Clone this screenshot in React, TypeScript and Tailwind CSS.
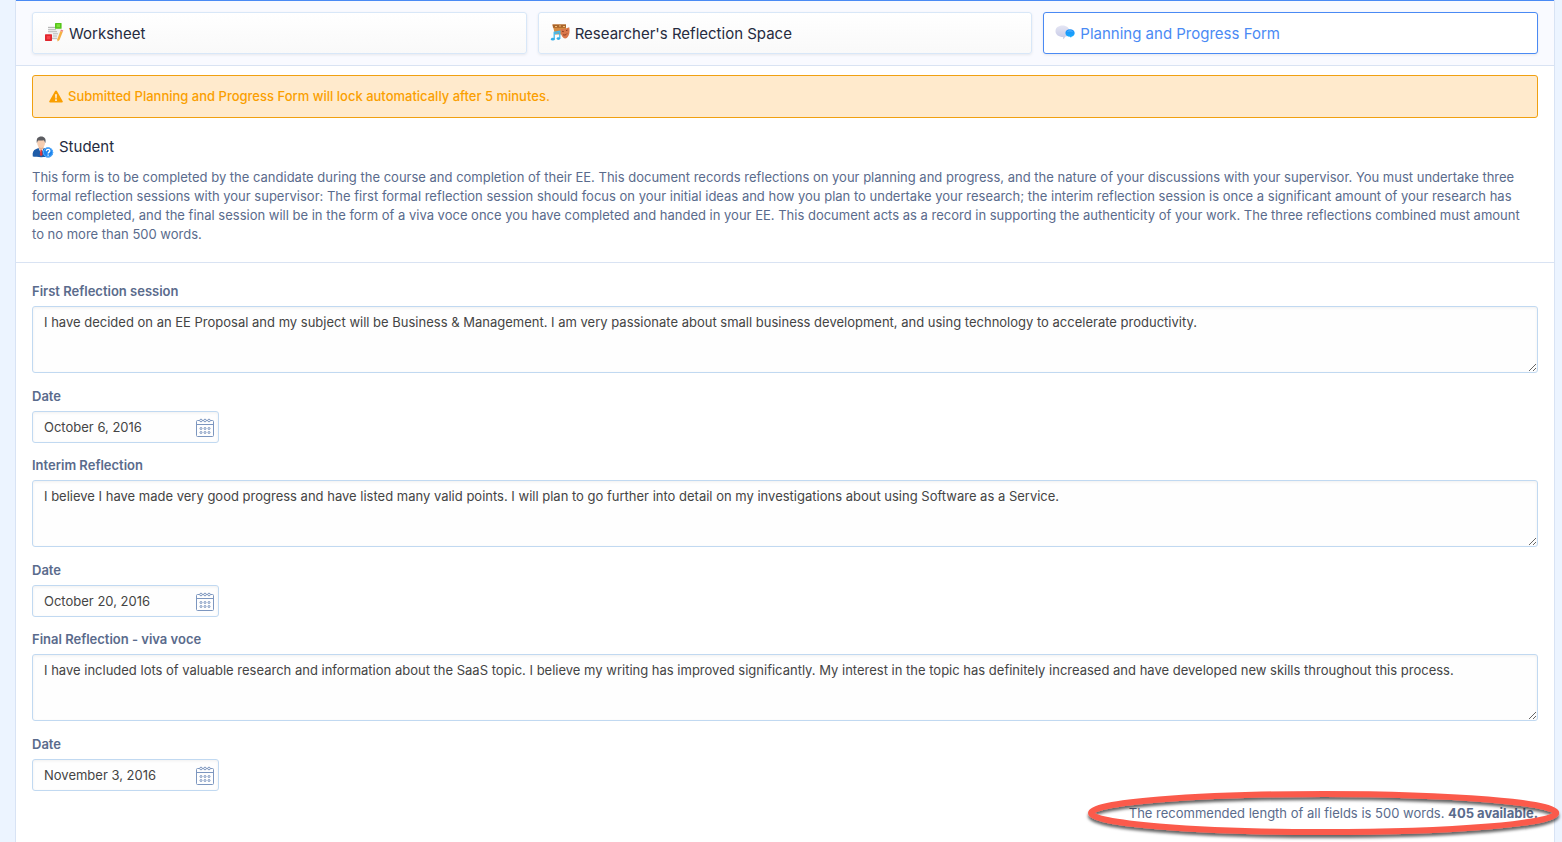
import { ReactNode, useState } from 'react'
import clsx from 'clsx'

interface Session {
  id: string
  label: string
  text: string
  date: string
}

const sessions: Session[] = [
  {
    id: 'first',
    label: 'First Reflection session',
    text: 'I have decided on an EE Proposal and my subject will be Business & Management. I am very passionate about small business development, and using technology to accelerate productivity.',
    date: 'October 6, 2016',
  },
  {
    id: 'interim',
    label: 'Interim Reflection',
    text: 'I believe I have made very good progress and have listed many valid points. I will plan to go further into detail on my investigations about using Software as a Service.',
    date: 'October 20, 2016',
  },
  {
    id: 'final',
    label: 'Final Reflection - viva voce',
    text: 'I have included lots of valuable research and information about the SaaS topic. I believe my writing has improved significantly. My interest in the topic has definitely increased and have developed new skills throughout this process.',
    date: 'November 3, 2016',
  },
]

const WorksheetIcon = () => (
  <svg viewBox="0 1 20 20" className="size-5" aria-hidden="true">
    <path d="M4 4h13l-2 14H5z" fill="#f1f1f1" />
    <path
      d="M4 5.5h7M4 7.7h8M4 9.7h9M9 11.8h5M9 14h4M8 16.3h5"
      stroke="#b8b8b8"
      strokeWidth="1"
    />
    <rect x="11" y="1" width="6.6" height="5.8" rx="0.6" fill="#55c51b" />
    <rect x="12.6" y="2.2" width="3.4" height="3" fill="#7ee03a" />
    <rect x="1" y="12.3" width="7" height="6.6" rx="0.6" fill="#e0262d" />
    <rect x="2.8" y="14" width="3.4" height="3.2" fill="#f8434a" />
    <path d="M16.4 9l2.400.8-3.300 8.200-1.900 1.400-.3-2.200z" fill="#f5b043" />
    <path d="M16.4 9l.5-1.400 2.400.8-.5 1.400z" fill="#ec7d7d" />
  </svg>
)

const ReflectionIcon = () => (
  <svg viewBox="0 0 20 20" className="size-5" aria-hidden="true">
    <path d="M2.5 1.500H16v10H5z" fill="#d58b42" />
    <path d="M2.5 1.500H16v3.200H3z" fill="#a9632a" />
    <path d="M5 3.500h2M9 3h2M13 3.500h2" stroke="#eec077" strokeWidth="1" />
    <path
      d="M10.6 6c2 .4 5-.2 8.600-1.800.8 3.400.6 10-3.900 11.400-3.400-.6-4.900-5-4.700-9.600z"
      fill="#d9764a"
    />
    <path
      d="M12 8.300l1.800.3M16 7.700l1.600-.6M13 11.700c1.400.8 3 .3 4-1.200"
      fill="none"
      stroke="#8f3f25"
      strokeWidth="1"
    />
    <path
      d="M4.2 16V9.400l5.600-1.200v7.600M4.200 10.800l5.600-1.200"
      fill="none"
      stroke="#46b9ec"
      strokeWidth="1.300"
    />
    <ellipse cx="2.800" cy="16.200" rx="1.900" ry="1.400" fill="#35aee8" />
    <ellipse cx="8.400" cy="15.600" rx="1.800" ry="1.400" fill="#35aee8" />
  </svg>
)

const ChatIcon = () => (
  <svg viewBox="0 0 20 20" className="size-5" aria-hidden="true">
    <defs>
      <linearGradient id="bubble" x1="0" y1="0" x2="0" y2="1">
        <stop offset="0" stopColor="#e4e5f3" />
        <stop offset="1" stopColor="#c6c9e6" />
      </linearGradient>
      <linearGradient id="reply" x1="0" y1="0" x2="0" y2="1">
        <stop offset="0" stopColor="#1c8df8" />
        <stop offset="1" stopColor="#17adff" />
      </linearGradient>
    </defs>
    <path
      d="M7.500 2.600c4 0 7 2.400 7 5.600s-2 5.200-4.400 5.600c-.4 1.200-1 1.900-2.200 2.400.4-.8.4-1.400.2-2.200C3.800 14 .5 11.600.5 8.200s3-5.600 7-5.600z"
      fill="url(#bubble)"
    />
    <path
      d="M15 6.200c2.700 0 4.700 1.600 4.700 3.800 0 1.900-1.400 3.300-3.300 3.700l-.4 1-1-.9c-2.700 0-4.600-1.700-4.600-3.800s1.900-3.800 4.600-3.800z"
      fill="url(#reply)"
    />
    <path d="M12.500 8.600c1.500-1 3.500-1 5 0" fill="none" stroke="#58b9ff" />
  </svg>
)

const StudentIcon = () => (
  <svg viewBox="0 0 22 22" className="size-[22px]" aria-hidden="true">
    <path
      d="M.8 20.600c-.6-4 .4-6.600 3.400-7.600l2.400-.9h5l2.600.9c2.600 1 3.500 3.600 3.500 7.600-4 .8-13 .8-16.900 0z"
      fill="#1e5ca8"
    />
    <path d="M6.600 12l2.500 6 2.500-6z" fill="#f4f6fa" />
    <path d="M8.500 13.600h1.300l.7 5-1.400 2-1.300-2z" fill="#d9363e" />
    <path d="M6.700 10h4.800v2.400l-2.400 1.500-2.400-1.500z" fill="#e8b18e" />
    <ellipse cx="9.100" cy="7" rx="3.900" ry="4.900" fill="#f6cdb0" />
    <path
      d="M4.900 7.200C4 2.700 6 .6 9.200.6s5.300 2.200 4.100 6.600c-.6-1.500-.8-2.400-1.600-3-1.800.5-4 .5-5.600.2-.6.700-.9 1.600-1.200 2.800z"
      fill="#5b5c61"
    />
    <circle cx="16" cy="16.400" r="5.200" fill="#1d84ee" />
    <circle cx="16" cy="16.400" r="4.600" fill="none" stroke="#5cb0fb" />
    <path
      d="M14.300 15.100c.1-2.500 3.600-2.300 3.500-.2-.1 1.300-1.700 1.200-1.700 2.600M16.100 18.500v1.300"
      fill="none"
      stroke="#fff"
      strokeWidth="1.300"
    />
  </svg>
)

const WarningIcon = () => (
  <svg viewBox="0 0 14 13" className="h-[13px] w-3.5" aria-hidden="true">
    <path
      fillRule="evenodd"
      d="M7 .4c.4 0 .7.200.9.500l5.800 10.400c.4.700-.1 1.300-.8 1.300H1.100c-.7 0-1.200-.6-.8-1.300L6.100.9c.2-.3.500-.5.900-.5zM6 4.200l.3 4.200h1.400L8 4.200zM6.100 9.300v1.700h1.800V9.300z"
      fill="#fa9f00"
    />
  </svg>
)

const CalendarIcon = () => (
  <svg
    viewBox="0 0 18 19"
    className="h-[19px] w-[18px]"
    fill="none"
    stroke="#7c96bf"
    aria-hidden="true"
  >
    <rect x="0.500" y="2.500" width="17" height="16" rx="1" />
    <path d="M.5 6.500h17" />
    <g fill="#fff">
      <circle cx="5" cy="2.500" r="1.300" />
      <circle cx="9" cy="2.500" r="1.300" />
      <circle cx="13" cy="2.500" r="1.300" />
    </g>
    {[10.5, 14.5].map((y) =>
      [5, 9, 13].map((x) => <circle key={`${x}-${y}`} cx={x} cy={y} r="1" />),
    )}
  </svg>
)

const tabs: { label: string; icon: ReactNode }[] = [
  { label: 'Worksheet', icon: <WorksheetIcon /> },
  { label: "Researcher's Reflection Space", icon: <ReflectionIcon /> },
  { label: 'Planning and Progress Form', icon: <ChatIcon /> },
]

function SessionFields({ session }: { session: Session }) {
  const [text, setText] = useState(session.text)
  const [date, setDate] = useState(session.date)
  const textId = `${session.id}-text`
  const dateId = `${session.id}-date`

  return (
    <div>
      <label
        htmlFor={textId}
        className="mb-[5px] block leading-5 font-semibold text-[#5a6b8c]"
      >
        {session.label}
      </label>
      <textarea
        id={textId}
        value={text}
        onChange={(e) => setText(e.target.value)}
        className="block h-[67px] w-full resize-y rounded-[3px] border border-[#c1d9f1] bg-[#fefefe] px-[11px] py-[5px] leading-5 text-[#444] shadow-[inset_0_1px_3px_rgba(0,0,0,0.06)] outline-none"
      />
      <label
        htmlFor={dateId}
        className="mt-[13px] mb-[5px] block leading-5 font-semibold text-[#5a6b8c]"
      >
        Date
      </label>
      <div className="flex h-8 w-[187px] items-center rounded-[3px] border border-[#c1d9f1] bg-[#fefefe] pr-1 pl-[11px] shadow-[inset_0_1px_3px_rgba(0,0,0,0.06)]">
        <input
          id={dateId}
          type="text"
          value={date}
          onChange={(e) => setDate(e.target.value)}
          className="h-full min-w-0 flex-1 bg-transparent text-[#444] outline-none"
        />
        <button type="button" aria-label="Pick a date">
          <CalendarIcon />
        </button>
      </div>
    </div>
  )
}

export default function App() {
  const [active, setActive] = useState(2)

  return (
    <div className="min-h-screen bg-[#ecf4ff] pr-[7px] pl-[15px] font-['Inter',sans-serif] text-[13px] text-[#5a6b8c]">
      <main className="min-h-screen border-x border-[#d8e3f4] bg-white">
        <nav className="grid grid-cols-3 gap-[11px] border-t border-b border-t-[#4a8af4] border-b-[#d9e3f3] bg-[#f9faff] px-4 py-[11px]">
          {tabs.map((tab, i) => (
            <button
              key={tab.label}
              type="button"
              onClick={() => setActive(i)}
              className={clsx(
                'flex h-[42px] items-center gap-[5px] rounded-[3px] border px-[11px] text-[15px] shadow-[0_1px_3px_rgba(0,0,0,0.08)]',
                i === active
                  ? 'border-[#4a8af4] bg-white text-[#4a8af4]'
                  : 'border-[#d8e7f8] bg-linear-to-b from-white to-[#f9f9f9] text-[#262b40]',
              )}
            >
              {tab.icon}
              <span className="pt-0.5">{tab.label}</span>
            </button>
          ))}
        </nav>

        <section className="border-b border-[#d9e3f3] px-4 pt-[9px] pb-[18px]">
          <p
            role="alert"
            className="flex h-[43px] items-center gap-[5px] rounded-[3px] border border-[#f0a010] bg-[#ffeacc] px-4 font-medium text-[#fa9f00]"
          >
            <WarningIcon />
            Submitted Planning and Progress Form will lock automatically after 5
            minutes.
          </p>
          <h2 className="mt-[17px] mb-[9px] flex h-6 items-center gap-[5px] text-[15px] text-[#262b40]">
            <StudentIcon />
            Student
          </h2>
          <p className="pr-2 leading-[19px]">
            This form is to be completed by the candidate during the course and
            completion of their EE. This document records reflections on your
            planning and progress, and the nature of your discussions with your
            supervisor. You must undertake three formal reflection sessions with
            your supervisor: The first formal reflection session should focus on
            your initial ideas and how you plan to undertake your research; the
            interim reflection session is once a significant amount of your
            research has been completed, and the final session will be in the
            form of a viva voce once you have completed and handed in your EE.
            This document acts as a record in supporting the authenticity of your
            work. The three reflections combined must amount to no more than 500
            words.
          </p>
        </section>

        <form className="px-4 pt-[18px]">
          <div className="flex flex-col gap-3">
            {sessions.map((session) => (
              <SessionFields key={session.id} session={session} />
            ))}
          </div>
          <div className="mt-3 flex justify-end">
            <p className="relative leading-5">
              The recommended length of all fields is 500 words.{' '}
              <strong className="font-bold">405 available.</strong>
              <svg
                viewBox="0 0 474 50"
                preserveAspectRatio="none"
                className="pointer-events-none absolute -top-3 -left-11 h-[50px] w-[calc(100%+68px)]"
                aria-hidden="true"
              >
                <defs>
                  <filter id="shadow" x="-5%" y="-20%" width="110%" height="150%">
                    <feDropShadow
                      dx="0"
                      dy="3"
                      stdDeviation="1.5"
                      floodColor="#000"
                      floodOpacity="0.6"
                    />
                  </filter>
                </defs>
                <ellipse
                  cx="237"
                  cy="22"
                  rx="231"
                  ry="19"
                  fill="none"
                  stroke="#fb5a4c"
                  strokeWidth="6"
                  filter="url(#shadow)"
                />
              </svg>
            </p>
          </div>
        </form>
      </main>
    </div>
  )
}
